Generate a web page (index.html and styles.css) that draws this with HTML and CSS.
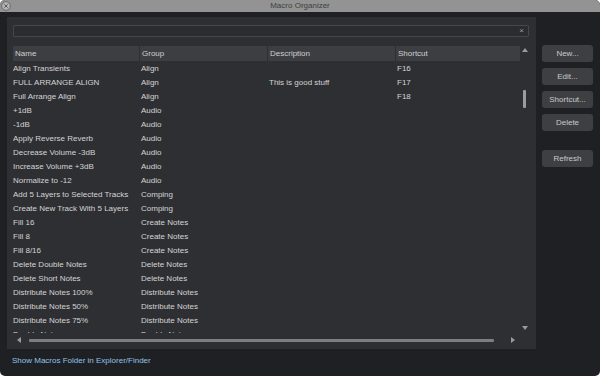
FILE: index.html
```html
<!DOCTYPE html>
<html>
<head>
<meta charset="utf-8">
<link rel="stylesheet" href="styles.css">
</head>
<body>
<div class="window">
  <div class="titlebar">
    <svg class="close" width="10" height="10" viewBox="0 0 10 10"><circle cx="5" cy="5" r="4.3" fill="#b4b4b4" stroke="#6a6a6a" stroke-width="1"/><path d="M3.3 3.3 L6.7 6.7 M6.7 3.3 L3.3 6.7" stroke="#5a5a5a" stroke-width="1"/></svg>
    <div class="title">Macro Organizer</div>
    <div class="spacer"></div>
  </div>
  <div class="content">
    <div class="panel">
      <div class="search"><span class="clear">×</span></div>
      <div class="listwrap">
        <div class="list">
          <div class="header">
            <div class="hcell">Name</div>
            <div class="hcell">Group</div>
            <div class="hcell">Description</div>
            <div class="hcell">Shortcut</div>
          </div>
          <div class="rows">
            <div class="row"><span>Align Transients</span><span>Align</span><span></span><span>F16</span></div>
            <div class="row"><span>FULL ARRANGE ALIGN</span><span>Align</span><span>This is good stuff</span><span>F17</span></div>
            <div class="row"><span>Full Arrange Align</span><span>Align</span><span></span><span>F18</span></div>
            <div class="row"><span>+1dB</span><span>Audio</span><span></span><span></span></div>
            <div class="row"><span>-1dB</span><span>Audio</span><span></span><span></span></div>
            <div class="row"><span>Apply Reverse Reverb</span><span>Audio</span><span></span><span></span></div>
            <div class="row"><span>Decrease Volume -3dB</span><span>Audio</span><span></span><span></span></div>
            <div class="row"><span>Increase Volume +3dB</span><span>Audio</span><span></span><span></span></div>
            <div class="row"><span>Normalize to -12</span><span>Audio</span><span></span><span></span></div>
            <div class="row"><span>Add 5 Layers to Selected Tracks</span><span>Comping</span><span></span><span></span></div>
            <div class="row"><span>Create New Track With 5 Layers</span><span>Comping</span><span></span><span></span></div>
            <div class="row"><span>Fill 16</span><span>Create Notes</span><span></span><span></span></div>
            <div class="row"><span>Fill 8</span><span>Create Notes</span><span></span><span></span></div>
            <div class="row"><span>Fill 8/16</span><span>Create Notes</span><span></span><span></span></div>
            <div class="row"><span>Delete Double Notes</span><span>Delete Notes</span><span></span><span></span></div>
            <div class="row"><span>Delete Short Notes</span><span>Delete Notes</span><span></span><span></span></div>
            <div class="row"><span>Distribute Notes 100%</span><span>Distribute Notes</span><span></span><span></span></div>
            <div class="row"><span>Distribute Notes 50%</span><span>Distribute Notes</span><span></span><span></span></div>
            <div class="row"><span>Distribute Notes 75%</span><span>Distribute Notes</span><span></span><span></span></div>
            <div class="row"><span>Double Notes</span><span>Double Notes</span><span></span><span></span></div>
          </div>
        </div>
        <div class="vscroll">
          <svg class="arrow up" width="6" height="4" viewBox="0 0 6 4"><path d="M0 4 L3 0 L6 4 Z" fill="#9a9a9a"/></svg>
          <div class="vtrack"><div class="vthumb"></div></div>
          <svg class="arrow down" width="6" height="4" viewBox="0 0 6 4"><path d="M0 0 L6 0 L3 4 Z" fill="#9a9a9a"/></svg>
        </div>
      </div>
      <div class="hscroll">
        <svg class="harrow" width="4" height="6" viewBox="0 0 4 6"><path d="M4 0 L4 6 L0 3 Z" fill="#9a9a9a"/></svg>
        <div class="htrack"></div>
        <svg class="harrow" width="4" height="6" viewBox="0 0 4 6"><path d="M0 0 L0 6 L4 3 Z" fill="#9a9a9a"/></svg>
      </div>
    </div>
    <div class="buttons">
      <div class="btn">New...</div>
      <div class="btn">Edit...</div>
      <div class="btn">Shortcut...</div>
      <div class="btn">Delete</div>
      <div class="btn refresh">Refresh</div>
    </div>
  </div>
  <div class="footer"><span class="link">Show Macros Folder in Explorer/Finder</span></div>
</div>
</body>
</html>
```
FILE: styles.css
```css
* { box-sizing: border-box; }
html, body { margin: 0; padding: 0; background: #ffffff; }
body { font-family: "Liberation Sans", Arial, sans-serif; font-size: 8px; -webkit-font-smoothing: antialiased; }

.window {
  width: 600px;
  height: 376px;
  border-radius: 5px;
  overflow: hidden;
  background: #1f2023;
  display: flex;
  flex-direction: column;
}

.titlebar {
  height: 12px;
  background: #939393;
  display: flex;
  align-items: center;
  padding: 0 1px 0 1px;
}
.close { display: block; flex: none; }
.title { flex: 1; text-align: center; color: #404040; line-height: 12px; }
.spacer { width: 10px; flex: none; }

.content {
  display: flex;
  padding: 5px 0 0 7px;
  height: 337px;
}

.panel {
  width: 529px;
  height: 332px;
  background: #2e2f33;
  padding: 8px 7px 0 6px;
  display: flex;
  flex-direction: column;
}

.search {
  height: 12px;
  background: #2b2c30;
  border: 1px solid #46474b;
  border-radius: 1px;
  display: flex;
  justify-content: flex-end;
  align-items: center;
  padding-right: 4px;
}
.clear { color: #a0a0a0; font-size: 8px; line-height: 8px; }

.listwrap {
  margin-top: 9px;
  display: flex;
  height: 287px;
}
.list { width: 507px; display: flex; flex-direction: column; overflow: hidden; }

.header {
  display: grid;
  grid-template-columns: 126px 127px 127px 124px;
  column-gap: 1px;
  height: 15px;
  flex: none;
}
.hcell {
  background: #3d3e42;
  color: #cfcfcf;
  padding-left: 2px;
  line-height: 15px;
}

.rows { flex: 1; overflow: hidden; padding-top: 1px; }
.row {
  display: grid;
  grid-template-columns: 126px 127px 127px 124px;
  column-gap: 1px;
  height: 14px;
  line-height: 14px;
  color: #d4d4d4;
  white-space: nowrap;
}
.row span:first-child { padding-left: 0; }
.row span { padding-left: 1px; overflow: hidden; }

.vscroll {
  width: 9px;
  display: flex;
  flex-direction: column;
  align-items: center;
  padding: 2px 0 3px 0;
}
.arrow { display: block; flex: none; }
.vtrack { flex: 1; width: 3px; }
.vthumb { width: 3px; height: 18px; margin-top: 38px; background: #9c9c9c; border-radius: 1px; }

.hscroll {
  height: 14px;
  display: flex;
  align-items: center;
  width: 507px;
  padding: 0 5px 0 4px;
  gap: 8px;
}
.harrow { display: block; flex: none; }
.htrack { flex: 1; height: 3px; background: #7e7e7e; border-radius: 1px; margin-right: 9px; }

.buttons {
  margin-left: 6px;
  padding-top: 28px;
  display: flex;
  flex-direction: column;
  gap: 6px;
  width: 51px;
}
.btn {
  height: 17px;
  background: #3e3f43;
  border-radius: 3px;
  color: #c9c9c9;
  text-align: center;
  line-height: 17px;
}
.btn.refresh { margin-top: 13px; }

.footer {
  flex: 1;
  padding: 7px 0 0 12px;
}
.link { color: #8fc4e8; line-height: 10px; display: block; }
```
